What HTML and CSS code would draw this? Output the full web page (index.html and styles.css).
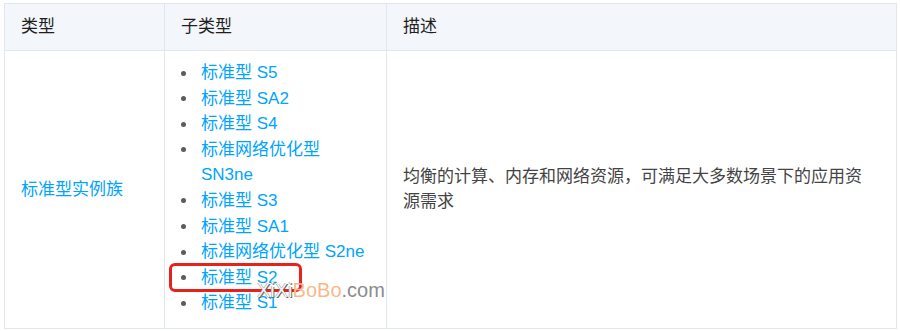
FILE: index.html
```html
<!DOCTYPE html>
<html lang="zh-CN">
<head>
<meta charset="utf-8">
<title>实例族</title>
<link rel="stylesheet" href="styles.css">
</head>
<body>
<div class="wrap">
  <table class="spec">
    <colgroup>
      <col class="c1">
      <col class="c2">
      <col class="c3">
    </colgroup>
    <thead>
      <tr>
        <th>类型</th>
        <th>子类型</th>
        <th>描述</th>
      </tr>
    </thead>
    <tbody>
      <tr>
        <td class="mid"><a class="link" href="#">标准型实例族</a></td>
        <td class="list-cell">
          <ul class="sub">
            <li><a class="link" href="#">标准型 S5</a></li>
            <li><a class="link" href="#">标准型 SA2</a></li>
            <li><a class="link" href="#">标准型 S4</a></li>
            <li><a class="link" href="#">标准网络优化型 SN3ne</a></li>
            <li><a class="link" href="#">标准型 S3</a></li>
            <li><a class="link" href="#">标准型 SA1</a></li>
            <li><a class="link" href="#">标准网络优化型 S2ne</a></li>
            <li class="marked"><a class="link" href="#">标准型 S2</a><span class="redbox"></span></li>
            <li><a class="link" href="#">标准型 S1</a></li>
          </ul>
        </td>
        <td class="mid desc">均衡的计算、内存和网络资源，可满足大多数场景下的应用资源需求</td>
      </tr>
    </tbody>
  </table>
  <div class="watermark"><span class="wm-a">XiXi</span><span class="wm-b">BoBo</span><span class="wm-c">.com</span></div>
</div>
</body>
</html>
```

FILE: styles.css
```css
html, body {
  margin: 0;
  padding: 0;
  background: #ffffff;
}

body {
  font-family: "Liberation Sans", "Noto Sans CJK SC", sans-serif;
  font-size: 17px;
  color: #333333;
}

.wrap {
  position: relative;
  padding: 3px 3px 0 4px;
}

.spec {
  width: 893px;
  table-layout: fixed;
  border-collapse: separate;
  border-spacing: 0;
  border-top: 1px solid #e1e7ef;
  border-left: 1px solid #e1e7ef;
}

.c1 { width: 160px; }
.c2 { width: 222px; }
.c3 { width: 510px; }

.spec th,
.spec td {
  border-right: 1px solid #e1e7ef;
  border-bottom: 1px solid #e1e7ef;
  text-align: left;
  padding: 11px 16px;
  line-height: 24px;
}

.spec th {
  background: #f3f6fa;
  font-weight: normal;
  color: #1f1f1f;
}

.spec td {
  vertical-align: middle;
  line-height: 25.6px;
}

.spec td.list-cell {
  padding: 9px 16px 12px 16px;
}

.spec td.desc {
  padding-right: 24px;
  color: #444444;
}

.link {
  color: #00a4ff;
  text-decoration: none;
}

.sub {
  list-style: none;
  margin: 0;
  padding: 0;
}

.sub li {
  display: flex;
  align-items: flex-start;
}

.sub li::before {
  content: "";
  flex: 0 0 5px;
  height: 5px;
  border-radius: 50%;
  background: #5c5c5c;
  margin: 10.5px 15px 0 0;
}

.marked {
  position: relative;
}

.redbox {
  position: absolute;
  left: -12px;
  top: -1.5px;
  width: 127px;
  height: 23px;
  border: 3px solid #e8221b;
  border-radius: 6px;
}

.watermark {
  position: absolute;
  left: 257px;
  top: 278px;
  font-family: "Liberation Sans", sans-serif;
  font-size: 20px;
  line-height: 24px;
  white-space: nowrap;
}

.wm-a {
  color: #f4f4f4;
  text-shadow: 1px 1px 0 #6a6a6a, -0.5px -0.5px 0 #8a8a8a;
}

.wm-b {
  color: #f7b98b;
}

.wm-c {
  color: #8c8c8c;
}
```
